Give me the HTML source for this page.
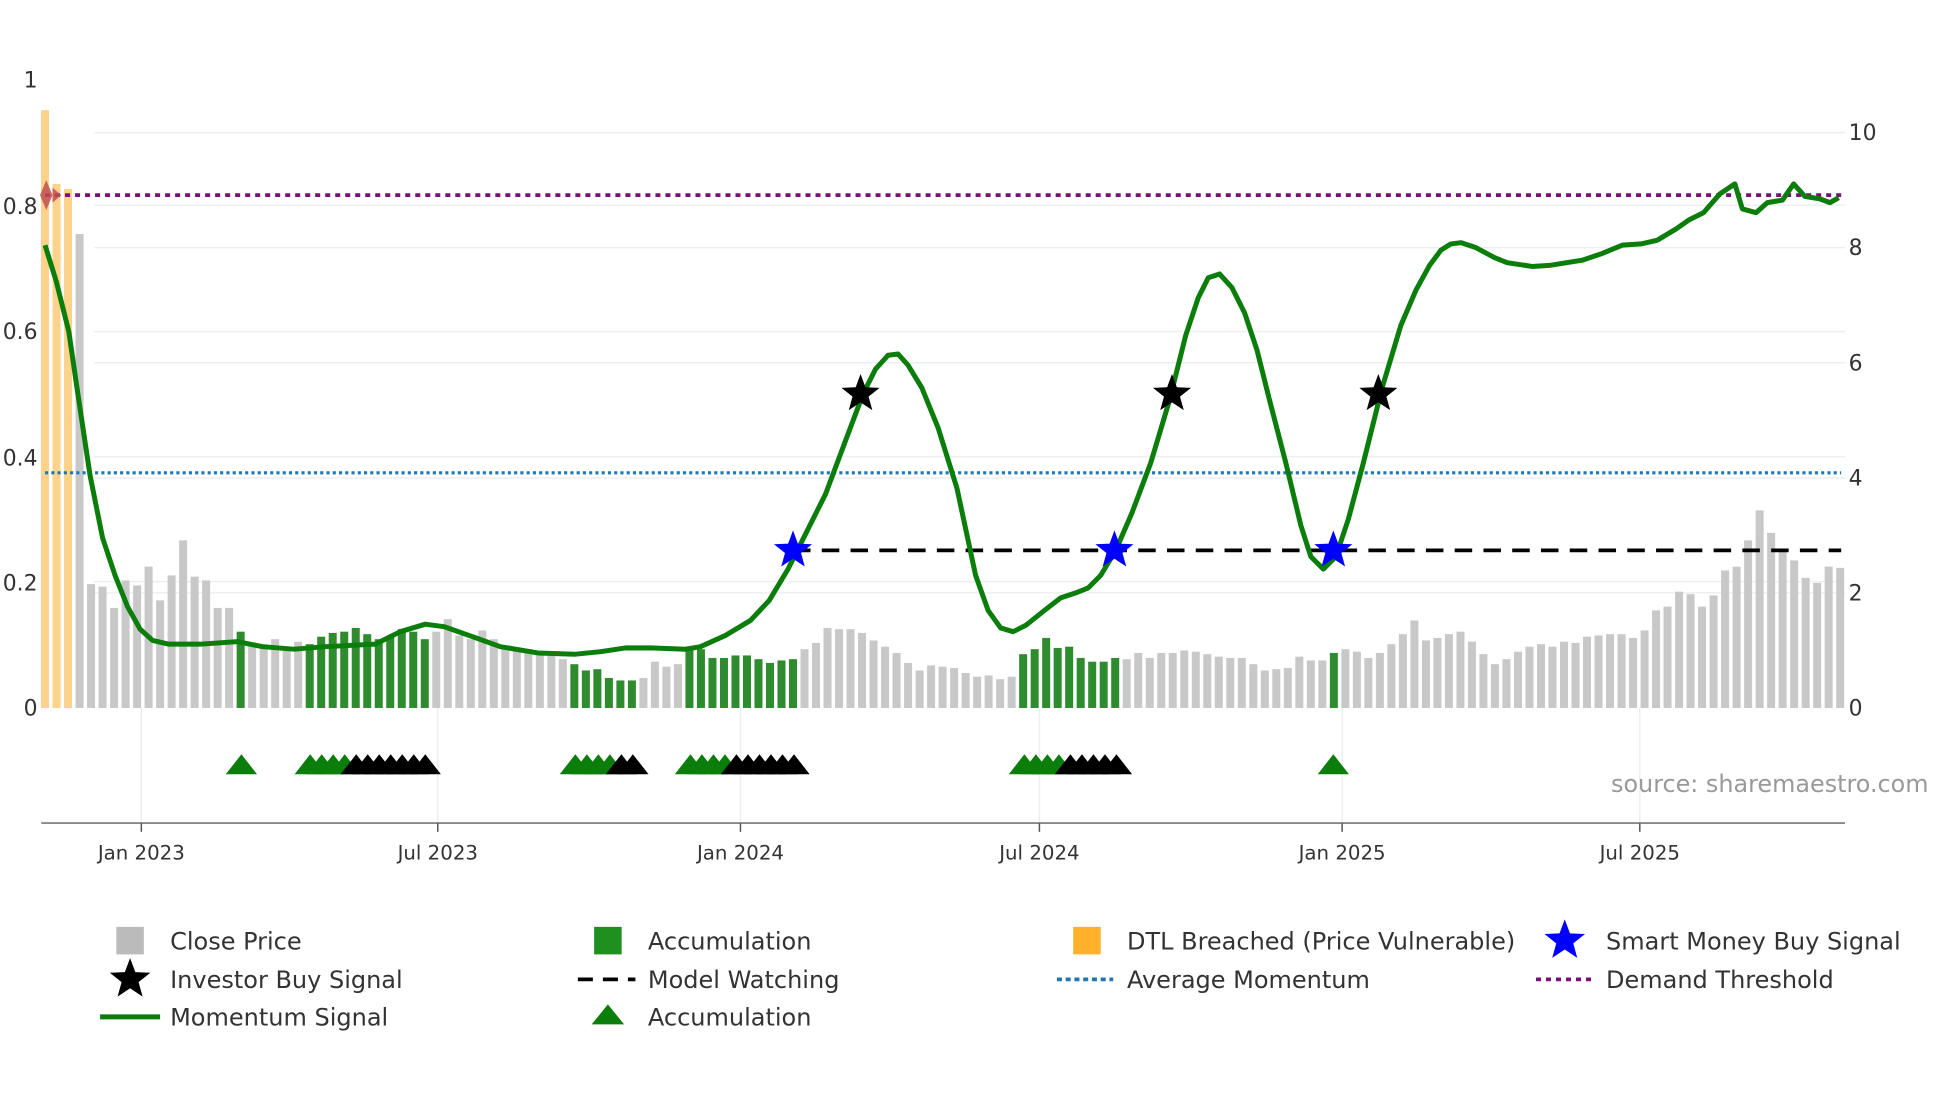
<!DOCTYPE html>
<html><head><meta charset="utf-8"><style>
html,body{margin:0;padding:0;background:#fff;width:1960px;height:1102px;overflow:hidden}
svg{display:block}
text{font-family:"DejaVu Sans","Liberation Sans",sans-serif;fill:#333}
</style></head><body>
<svg id="s" width="1960" height="1102" viewBox="0 0 1567 881" xmlns="http://www.w3.org/2000/svg">
<g stroke="#eceff2" stroke-width="1.2">
<line x1="75" y1="106" x2="1475" y2="106"/><line x1="75" y1="198" x2="1475" y2="198"/><line x1="75" y1="290" x2="1475" y2="290"/><line x1="75" y1="382" x2="1475" y2="382"/><line x1="75" y1="474" x2="1475" y2="474"/>
<line x1="75" y1="164" x2="1475" y2="164"/><line x1="75" y1="265" x2="1475" y2="265"/><line x1="75" y1="365" x2="1475" y2="365"/><line x1="75" y1="465" x2="1475" y2="465"/>
<line x1="113" y1="566" x2="113" y2="658"/><line x1="350" y1="566" x2="350" y2="658"/><line x1="592" y1="566" x2="592" y2="658"/><line x1="831" y1="566" x2="831" y2="658"/><line x1="1073" y1="566" x2="1073" y2="658"/><line x1="1311" y1="566" x2="1311" y2="658"/>
</g>
<g id="bars"></g>
<line x1="36" y1="378" x2="1472" y2="378" stroke="#1f77b4" stroke-width="2.5" stroke-dasharray="2.5,2.5"/>
<line x1="36" y1="156" x2="1472" y2="156" stroke="#7a0f7a" stroke-width="3" stroke-dasharray="4,4"/>
<line x1="634" y1="440" x2="1472" y2="440" stroke="#000" stroke-width="3" stroke-dasharray="14,9"/>
<path d="M37,144 L42,156 L37,168 L32,156Z M42,150 L49,156 L42,162Z" fill="#c0504d" opacity="0.85"/>
<polyline id="mom" fill="none" stroke="#0a7d0a" stroke-width="4" stroke-linejoin="round" points="36,196 45,225 55,265 63,320 72,380 82,430 92,460 102,485 112,503 122,512 135,515 160,515 190,513 210,517 235,519 260,517 300,515 320,505 340,499 355,501 375,508 400,517 430,522 460,523 480,521 500,518 520,518 548,519 560,517 580,508 600,496 615,480 630,455 645,425 660,395 675,355 690,315 700,295 710,284 718,283 726,292 737,310 750,342 765,390 780,460 790,488 800,502 810,505 820,500 835,488 848,478 860,474 870,470 880,460 892,440 905,410 920,370 935,320 948,268 958,238 966,222 975,219 985,230 995,250 1005,280 1015,320 1028,370 1040,420 1048,445 1058,455 1068,445 1078,415 1090,370 1105,310 1120,260 1132,232 1143,212 1152,200 1160,195 1168,194 1180,198 1195,206 1205,210 1225,213 1240,212 1265,208 1280,203 1297,196 1312,195 1325,192 1340,183 1350,176 1362,170 1375,155 1387,147 1393,167 1404,170 1413,162 1425,160 1434,147 1443,157 1455,159 1463,162 1470,158"/>
<g id="stars"></g>
<g id="tri"></g>
<line x1="33" y1="658" x2="1475" y2="658" stroke="#888" stroke-width="1.5"/>
<g stroke="#555" stroke-width="1.2"><line x1="113" y1="658" x2="113" y2="665"/><line x1="350" y1="658" x2="350" y2="665"/><line x1="592" y1="658" x2="592" y2="665"/><line x1="831" y1="658" x2="831" y2="665"/><line x1="1073" y1="658" x2="1073" y2="665"/><line x1="1311" y1="658" x2="1311" y2="665"/></g>
<g font-size="15.8" text-anchor="middle">
<text x="113" y="687">Jan 2023</text><text x="350" y="687">Jul 2023</text><text x="592" y="687">Jan 2024</text><text x="831" y="687">Jul 2024</text><text x="1073" y="687">Jan 2025</text><text x="1311" y="687">Jul 2025</text>
</g>
<g font-size="17.5" text-anchor="end">
<text x="30" y="70">1</text><text x="30" y="171">0.8</text><text x="30" y="271">0.6</text><text x="30" y="372">0.4</text><text x="30" y="472">0.2</text><text x="30" y="572">0</text>
</g>
<g font-size="17.5">
<text x="1478" y="112">10</text><text x="1478" y="204">8</text><text x="1478" y="296">6</text><text x="1478" y="388">4</text><text x="1478" y="480">2</text><text x="1478" y="572">0</text>
</g>
<text x="1288" y="633" font-size="19.1" style="fill:#999">source: sharemaestro.com</text>
<g font-size="19.2">
<rect x="93" y="741" width="22" height="22" fill="#bbb"/><text x="136" y="759">Close Price</text>
<rect x="475" y="741" width="22" height="22" fill="#1f8f1f"/><text x="518" y="759">Accumulation</text>
<rect x="858" y="741" width="22" height="22" fill="#fdb22a"/><text x="901" y="759">DTL Breached (Price Vulnerable)</text>
<text x="1284" y="759">Smart Money Buy Signal</text>
<text x="136" y="790">Investor Buy Signal</text>
<line x1="462" y1="783" x2="508" y2="783" stroke="#000" stroke-width="3" stroke-dasharray="12,8"/><text x="518" y="790">Model Watching</text>
<line x1="845" y1="783" x2="890" y2="783" stroke="#1f77b4" stroke-width="3" stroke-dasharray="4,3"/><text x="901" y="790">Average Momentum</text>
<line x1="1228" y1="783" x2="1273" y2="783" stroke="#7a0f7a" stroke-width="3" stroke-dasharray="4,4"/><text x="1284" y="790">Demand Threshold</text>
<line x1="80" y1="813" x2="128" y2="813" stroke="#0a7d0a" stroke-width="4"/><text x="136" y="820">Momentum Signal</text>
<path d="M486,803 L499,819 L473,819Z" fill="#0a7d0a"/><text x="518" y="820">Accumulation</text>
</g>
<g id="lstars"></g>
</svg>
<script>
var NS="http://www.w3.org/2000/svg";
function el(p,t,a){var e=document.createElementNS(NS,t);for(var k in a)e.setAttribute(k,a[k]);p.appendChild(e);return e;}
var tops=[88,147,151,187,467,469,486,464,468,453,480,460,432,461,464,486,486,505,517,515,511,517,513,515,509,506,505,502,507,511,509,503,505,511,505,495,508,511,504,511,517,519,519,521,524,527,531,536,535,542,544,544,542,529,533,531,517,519,526,526,524,524,527,530,528,527,519,514,502,503,503,506,512,517,522,530,536,532,533,534,538,541,540,543,541,523,519,510,518,517,526,529,529,526,527,522,526,522,522,520,521,523,525,526,526,531,536,535,534,525,528,528,522,519,521,526,522,515,507,496,512,510,507,505,513,523,531,527,521,517,515,517,513,514,509,508,507,507,510,504,488,485,473,475,485,476,456,453,432,408,426,441,448,462,466,453,454];
var g=document.getElementById('bars');
for(var i=0;i<tops.length;i++){var x=36+i*9.2;var c='#c8c8c8';
if(i<3)c='#fdd28a';else if(i==17||(i>=23&&i<=33)||(i>=46&&i<=51)||(i>=56&&i<=65)||(i>=85&&i<=93)||i==112)c='#2e8b2e';
el(g,'rect',{x:x-3.2,y:tops[i],width:6.4,height:566-tops[i],fill:c});}
function star(p,cx,cy,r,fill){var pts=[];for(var k=0;k<10;k++){var rr=k%2?r*0.42:r;var a=-Math.PI/2+k*Math.PI/5;pts.push((cx+rr*Math.cos(a)).toFixed(1)+','+(cy+rr*Math.sin(a)).toFixed(1));}el(p,'polygon',{points:pts.join(' '),fill:fill});}
var s=document.getElementById('stars');
[[634,440],[891,440],[1066,440]].forEach(function(q){star(s,q[0],q[1],16,'#0000ff');});
[[688,315],[937,315],[1102,315]].forEach(function(q){star(s,q[0],q[1],16,'#000');});
var ls=document.getElementById('lstars');star(ls,1251,752,17,'#0000ff');star(ls,104,783,17,'#000');
var t=document.getElementById('tri');
function tri(x,c){el(t,'path',{d:'M'+x+',603 L'+(x+12.5)+',619 L'+(x-12.5)+',619Z',fill:c});}
tri(193,'#0a7d0a');
function grp(a,ng,nb){for(var k=0;k<ng;k++)tri(a+k*9.2,'#0a7d0a');for(var k=0;k<nb;k++)tri(a+(ng+k)*9.2,'#000');}
grp(248,4,7);grp(460,4,2);grp(552,4,6);grp(819,4,5);
tri(1066,'#0a7d0a');
</script>
</body></html>
